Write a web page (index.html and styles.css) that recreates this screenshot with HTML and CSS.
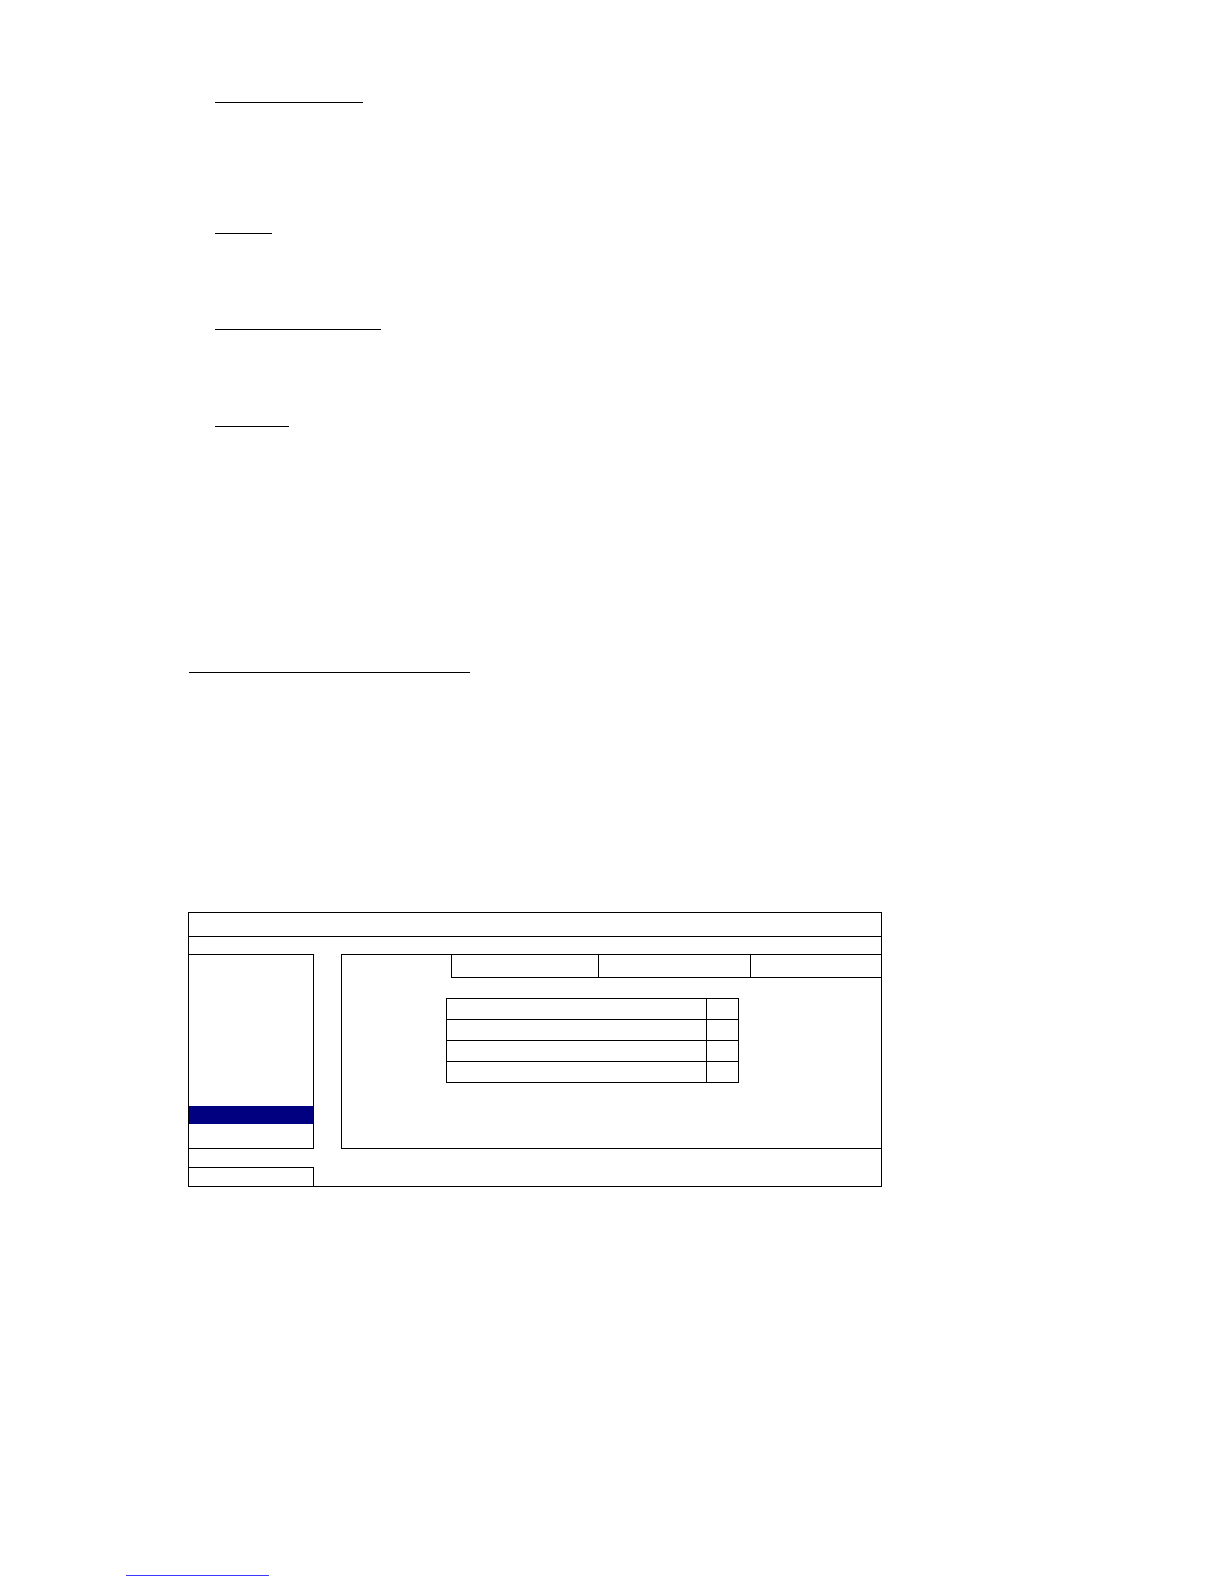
FILE: index.html
```html
<!DOCTYPE html>
<html>
<head>
<meta charset="utf-8">
<link rel="stylesheet" href="styles.css">
</head>
<body>
<div class="doc">
  <div class="rule r1"></div>
  <div class="rule r2"></div>
  <div class="rule r3"></div>
  <div class="rule r4"></div>
  <div class="rule r5"></div>

  <div class="window">
    <div class="titlebar"></div>
    <div class="subbar"></div>
    <div class="main">
      <div class="side">
        <div class="side-sel"></div>
      </div>
      <div class="panel">
        <div class="tabs">
          <div class="tab t1"></div>
          <div class="tab t2"></div>
          <div class="tab t3"></div>
        </div>
        <div class="table">
          <div class="cell wide"></div><div class="cell narrow"></div>
          <div class="cell wide"></div><div class="cell narrow"></div>
          <div class="cell wide"></div><div class="cell narrow"></div>
          <div class="cell wide"></div><div class="cell narrow"></div>
        </div>
      </div>
    </div>
    <div class="footer">
      <div class="footer-box"></div>
    </div>
  </div>

  <div class="rule link"></div>
</div>
</body>
</html>
```
FILE: styles.css
```css
html, body {
  margin: 0;
  padding: 0;
  background: #ffffff;
  font-family: "Liberation Sans", Arial, sans-serif;
}

.doc {
  display: flex;
  flex-direction: column;
  align-items: flex-start;
}

.rule {
  height: 1px;
  background: #000000;
}

.r1 { margin: 102px 0 0 215px; width: 148px; }
.r2 { margin: 130px 0 0 215px; width: 57px; }
.r3 { margin: 95px 0 0 215px; width: 166px; }
.r4 { margin: 96px 0 0 215px; width: 74px; }
.r5 { margin: 245px 0 0 189px; width: 281px; }

.window {
  margin: 239px 0 0 188px;
  width: 692px;
  border: 1px solid #000000;
}

.titlebar {
  height: 23px;
  border-bottom: 1px solid #000000;
}

.subbar {
  height: 17px;
}

.main {
  display: flex;
  align-items: stretch;
}

.side {
  width: 124px;
  height: 193px;
  border-top: 1px solid #000000;
  border-right: 1px solid #000000;
  border-bottom: 1px solid #000000;
  display: flex;
  flex-direction: column;
}

.side-sel {
  margin-top: 151px;
  height: 18px;
  background: #000080;
}

.panel {
  margin-left: 27px;
  flex: 1;
  height: 193px;
  border-top: 1px solid #000000;
  border-left: 1px solid #000000;
  border-bottom: 1px solid #000000;
}

.tabs {
  margin-left: 109px;
  display: flex;
  height: 22px;
  border-left: 1px solid #000000;
  border-bottom: 1px solid #000000;
}

.tab {
  height: 22px;
}

.t1 { width: 146px; border-right: 1px solid #000000; }
.t2 { width: 151px; border-right: 1px solid #000000; }
.t3 { flex: 1; }

.table {
  margin: 20px 0 0 104px;
  width: 292px;
  display: grid;
  grid-template-columns: 260px 32px;
  grid-auto-rows: 21px;
  border-top: 1px solid #000000;
  border-left: 1px solid #000000;
}

.cell {
  border-right: 1px solid #000000;
  border-bottom: 1px solid #000000;
}

.footer {
  height: 37px;
  display: flex;
  flex-direction: column;
}

.footer-box {
  margin-top: 18px;
  width: 124px;
  height: 18px;
  border-top: 1px solid #000000;
  border-right: 1px solid #000000;
}

.link {
  margin: 388px 0 0 126px;
  width: 143px;
  background: #3a3aff;
}
```
